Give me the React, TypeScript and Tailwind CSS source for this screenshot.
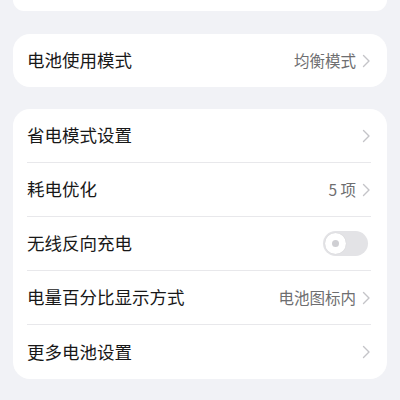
import React from 'react';

const font = { fontFamily: '"Noto Sans CJK SC", "Noto Sans", sans-serif' };

function Chevron() {
  return (
    <svg width="9" height="14" viewBox="0 0 9 14" fill="none" className="ml-[6px]">
      <path d="M1.5 1.5L7 7L1.5 12.5" stroke="#c4c4c8" strokeWidth="1.4" strokeLinecap="round" strokeLinejoin="round" />
    </svg>
  );
}

function Toggle() {
  return (
    <div className="w-[45px] h-[25px] rounded-full bg-[#e3e3e6] flex items-center pl-[2px]">
      <div className="w-[21px] h-[21px] rounded-full bg-white flex items-center justify-center shadow-[0_0_1px_rgba(0,0,0,0.15)]">
        <div className="w-[7px] h-[7px] rounded-full bg-[#cfcfd3]" />
      </div>
    </div>
  );
}

type Row = { label: string; value?: string; toggle?: boolean };

function SettingRow({ row, last }: { row: Row; last?: boolean }) {
  return (
    <div className={`h-[54px] flex items-center justify-between ${last ? '' : 'border-b border-[#e8e8eb]'}`}>
      <span className="text-[17.5px] text-[#181818]">{row.label}</span>
      {row.toggle ? (
        <div className="mr-[3px]"><Toggle /></div>
      ) : (
        <div className="flex items-center">
          {row.value && <span className="text-[15.5px] text-[#6e6e70]">{row.value}</span>}
          <Chevron />
        </div>
      )}
    </div>
  );
}

export default function App() {
  const rows: Row[] = [
    { label: '省电模式设置' },
    { label: '耗电优化', value: '5 项' },
    { label: '无线反向充电', toggle: true },
    { label: '电量百分比显示方式', value: '电池图标内' },
    { label: '更多电池设置' },
  ];

  return (
    <div className="w-[400px] h-[400px] bg-[#f1f2f6] px-[13px] overflow-hidden" style={font}>
      <div className="h-[11px] bg-white rounded-b-[16px]" />
      <div className="mt-[23px] bg-white rounded-[17px] h-[53px] pl-[14px] pr-[16px] flex items-center justify-between">
        <span className="text-[17.5px] text-[#181818]">电池使用模式</span>
        <div className="flex items-center">
          <span className="text-[15.5px] text-[#6e6e70]">均衡模式</span>
          <Chevron />
        </div>
      </div>
      <div className="mt-[22px] bg-white rounded-[17px] pl-[14px] pr-[16px]">
        {rows.map((r, i) => (
          <SettingRow key={r.label} row={r} last={i === rows.length - 1} />
        ))}
      </div>
    </div>
  );
}
